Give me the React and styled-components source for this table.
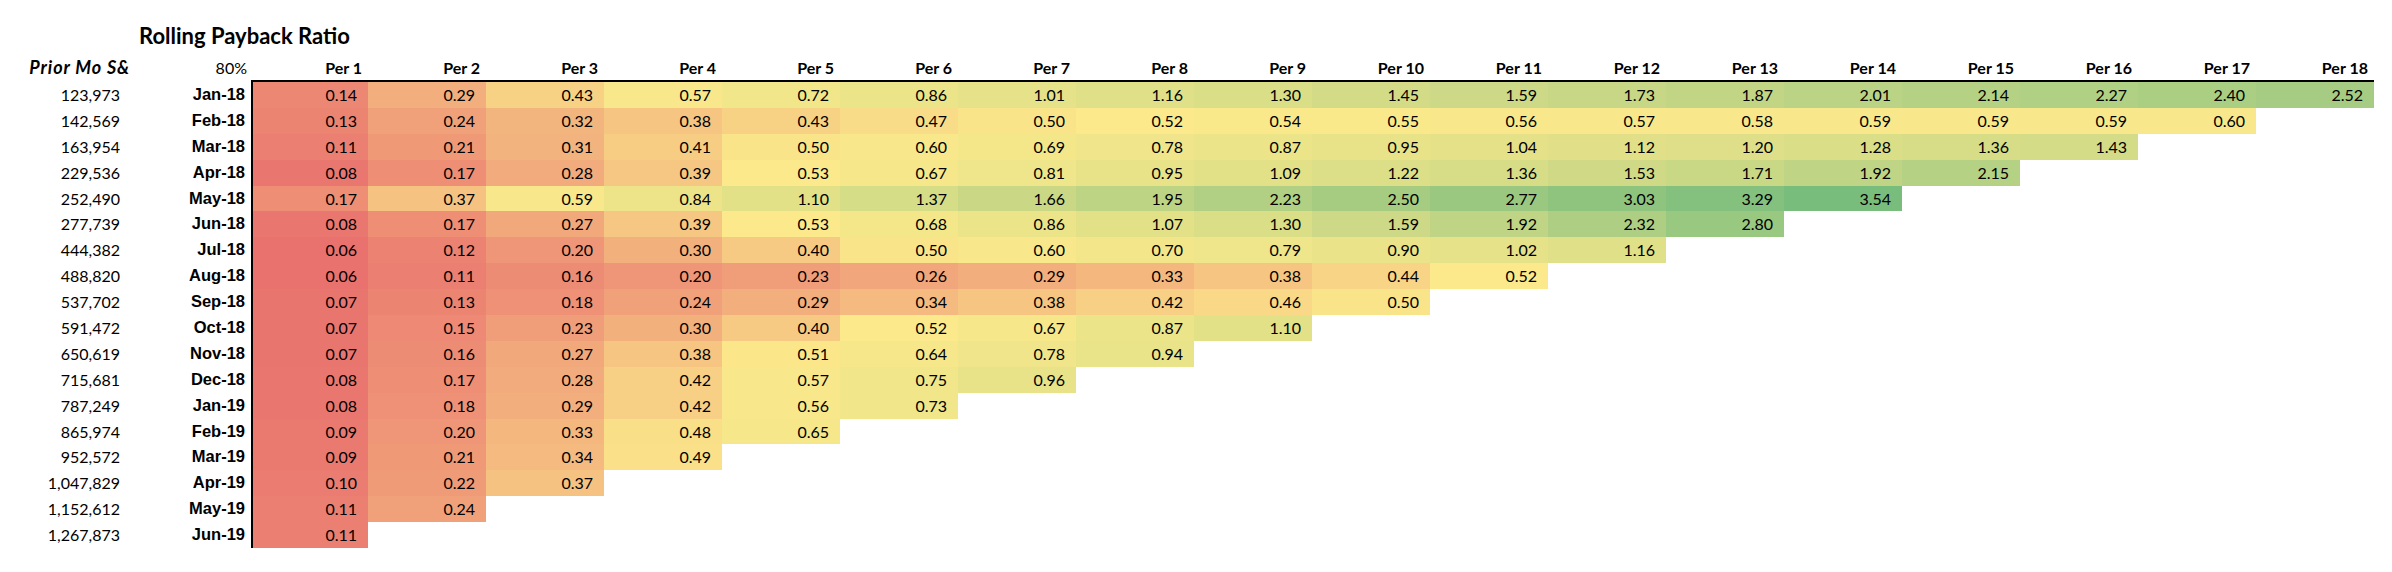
import React from "react";
import styled, { createGlobalStyle } from "styled-components";

const GlobalStyle = createGlobalStyle`
  html, body {
    margin: 0;
    padding: 0;
    background: #ffffff;
  }
  body {
    font-family: Lato, "Open Sans", "Noto Sans", sans-serif;
    color: #000000;
  }
`;

// column widths of the sheet: spend, month, Per 1 (with its left rule), Per 2..18
const COLS = "130px 121px 117px repeat(17, 118px)";

const rows = [
  ["123,973", "Jan-18", [0.14, 0.29, 0.43, 0.57, 0.72, 0.86, 1.01, 1.16, 1.3, 1.45, 1.59, 1.73, 1.87, 2.01, 2.14, 2.27, 2.4, 2.52]],
  ["142,569", "Feb-18", [0.13, 0.24, 0.32, 0.38, 0.43, 0.47, 0.5, 0.52, 0.54, 0.55, 0.56, 0.57, 0.58, 0.59, 0.59, 0.59, 0.6]],
  ["163,954", "Mar-18", [0.11, 0.21, 0.31, 0.41, 0.5, 0.6, 0.69, 0.78, 0.87, 0.95, 1.04, 1.12, 1.2, 1.28, 1.36, 1.43]],
  ["229,536", "Apr-18", [0.08, 0.17, 0.28, 0.39, 0.53, 0.67, 0.81, 0.95, 1.09, 1.22, 1.36, 1.53, 1.71, 1.92, 2.15]],
  ["252,490", "May-18", [0.17, 0.37, 0.59, 0.84, 1.1, 1.37, 1.66, 1.95, 2.23, 2.5, 2.77, 3.03, 3.29, 3.54]],
  ["277,739", "Jun-18", [0.08, 0.17, 0.27, 0.39, 0.53, 0.68, 0.86, 1.07, 1.3, 1.59, 1.92, 2.32, 2.8]],
  ["444,382", "Jul-18", [0.06, 0.12, 0.2, 0.3, 0.4, 0.5, 0.6, 0.7, 0.79, 0.9, 1.02, 1.16]],
  ["488,820", "Aug-18", [0.06, 0.11, 0.16, 0.2, 0.23, 0.26, 0.29, 0.33, 0.38, 0.44, 0.52]],
  ["537,702", "Sep-18", [0.07, 0.13, 0.18, 0.24, 0.29, 0.34, 0.38, 0.42, 0.46, 0.5]],
  ["591,472", "Oct-18", [0.07, 0.15, 0.23, 0.3, 0.4, 0.52, 0.67, 0.87, 1.1]],
  ["650,619", "Nov-18", [0.07, 0.16, 0.27, 0.38, 0.51, 0.64, 0.78, 0.94]],
  ["715,681", "Dec-18", [0.08, 0.17, 0.28, 0.42, 0.57, 0.75, 0.96]],
  ["787,249", "Jan-19", [0.08, 0.18, 0.29, 0.42, 0.56, 0.73]],
  ["865,974", "Feb-19", [0.09, 0.2, 0.33, 0.48, 0.65]],
  ["952,572", "Mar-19", [0.09, 0.21, 0.34, 0.49]],
  ["1,047,829", "Apr-19", [0.1, 0.22, 0.37]],
  ["1,152,612", "May-19", [0.11, 0.24]],
  ["1,267,873", "Jun-19", [0.11]],
];

const PERIODS = 18;

// excel style 3 colour scale: min -> 50th percentile -> max
const LOW = [233, 114, 110];
const MID = [251, 233, 139];
const HIGH = [121, 189, 125];

const allValues = rows.flatMap((r) => r[2]).sort((a, b) => a - b);
const minV = allValues[0];
const maxV = allValues[allValues.length - 1];
const midV = (() => {
  const rank = 0.5 * (allValues.length - 1);
  const lo = Math.floor(rank);
  const hi = Math.ceil(rank);
  return allValues[lo] + (allValues[hi] - allValues[lo]) * (rank - lo);
})();

const mix = (a, b, t) =>
  `rgb(${a.map((c, i) => Math.round(c + (b[i] - c) * t)).join(",")})`;

const scaleColor = (v) => {
  if (v <= midV) return mix(LOW, MID, (v - minV) / (midV - minV));
  return mix(MID, HIGH, (v - midV) / (maxV - midV));
};

const Sheet = styled.div`
  width: 2392px;
  height: 572px;
  overflow: hidden;
`;

const TitleRow = styled.div`
  display: grid;
  grid-template-columns: ${COLS};
  height: 55px;
  align-items: end;
`;

const Title = styled.div`
  grid-column: 2 / span 3;
  padding: 0 0 6px 9px;
  font-size: 22px;
  line-height: 26px;
  font-weight: 700;
  white-space: nowrap;
`;

const HeaderRow = styled.div`
  display: grid;
  grid-template-columns: ${COLS};
  height: 27px;
`;

const CornerLabel = styled.div`
  text-align: right;
  font-size: 18px;
  line-height: 25px;
  font-weight: 700;
  font-style: italic;
  letter-spacing: 0.9px;
  white-space: nowrap;
`;

const Rate = styled.div`
  text-align: right;
  padding-right: 4px;
  font-size: 16px;
  line-height: 25px;
`;

const PeriodHead = styled.div`
  text-align: right;
  padding-right: 6px;
  font-size: 16px;
  line-height: 25px;
  font-weight: 700;
  white-space: nowrap;
  border-bottom: 2px solid #000;
`;

const DataRow = styled.div`
  display: grid;
  grid-template-columns: ${COLS};
  height: 25.9px;
`;

const Spend = styled.div`
  text-align: right;
  padding-right: 10px;
  font-size: 16px;
  line-height: 25.9px;
  white-space: nowrap;
`;

const Month = styled.div`
  text-align: right;
  padding-right: 6px;
  font-family: "Liberation Sans", Arial, sans-serif;
  font-size: 16.5px;
  font-weight: 700;
  line-height: 25.9px;
  white-space: nowrap;
`;

const Value = styled.div`
  text-align: right;
  padding-right: 11px;
  font-size: 16px;
  line-height: 25.9px;
  border-left: ${(p) => (p.$first ? "2px solid #000" : "none")};
`;

const App = () => {
  return (
    <Sheet>
      <GlobalStyle />
      <TitleRow>
        <Title>Rolling Payback Ratio</Title>
      </TitleRow>
      <HeaderRow>
        <CornerLabel>Prior Mo S&amp;</CornerLabel>
        <Rate>80%</Rate>
        {Array.from({ length: PERIODS }, (_, i) => (
          <PeriodHead key={i}>Per {i + 1}</PeriodHead>
        ))}
      </HeaderRow>
      {rows.map(([spend, month, values]) => (
        <DataRow key={month}>
          <Spend>{spend}</Spend>
          <Month>{month}</Month>
          {Array.from({ length: PERIODS }, (_, i) => {
            const v = values[i];
            if (v === undefined) {
              return <Value key={i} $first={i === 0} />;
            }
            return (
              <Value
                key={i}
                $first={i === 0}
                style={{ background: scaleColor(v) }}
              >
                {v.toFixed(2)}
              </Value>
            );
          })}
        </DataRow>
      ))}
    </Sheet>
  );
};

export default App;
